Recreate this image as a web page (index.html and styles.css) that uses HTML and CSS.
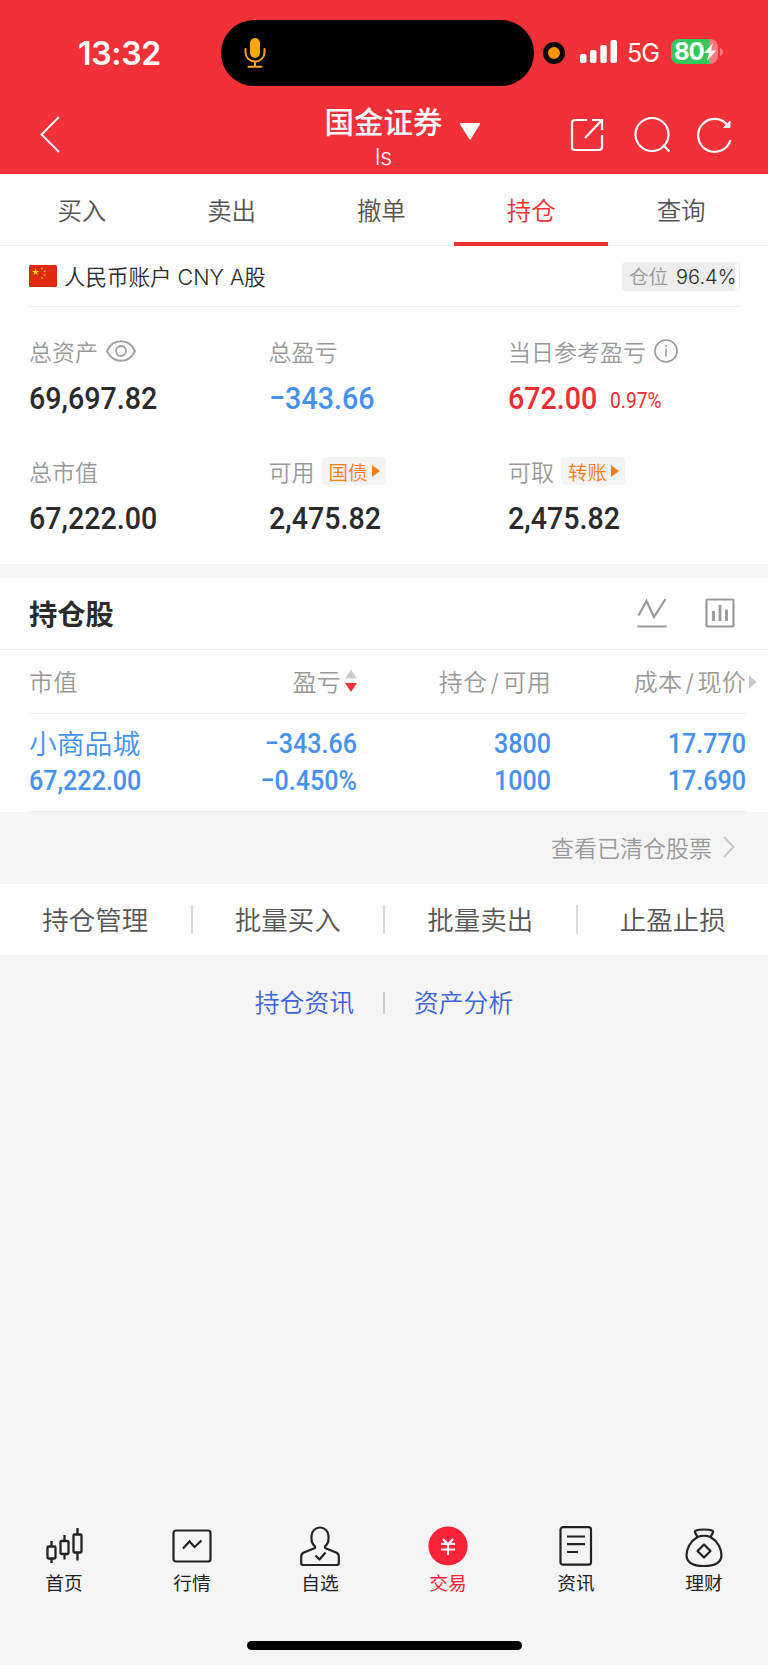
FILE: index.html
```
<!DOCTYPE html>
<html lang="zh-CN">
<head>
  <meta charset="UTF-8">
  <meta name="viewport" content="width=device-width, initial-scale=1.0">
  <title>持仓</title>
  <link rel="stylesheet" href="styles.css">
</head>
<body>

  <header class="header">
    <div class="status">
      <span class="time">13:32</span>
      <div class="island">
        <svg width="22" height="32" viewBox="0 0 22 32" fill="none" stroke="#ffa60a" stroke-width="2">
          <rect x="6" y="1" width="10" height="20" rx="5" fill="#ffa60a" stroke="none"/>
          <path d="M1.5 12v3.5a9.5 9 0 0 0 19 0V12M11 24.5v5M4.500 29.700h13" stroke-linecap="round"/>
        </svg>
      </div>
      <span class="rec-dot"></span>
      <svg class="signal" width="38" height="24" viewBox="0 0 38 24" fill="#fff">
        <rect x="0" y="14" width="6.500" height="9" rx="2"/>
        <rect x="10" y="10" width="6.500" height="13" rx="2"/>
        <rect x="20.300" y="5" width="6.500" height="18" rx="2"/>
        <rect x="30.500" y="0" width="6.500" height="23" rx="2"/>
      </svg>
      <span class="net">5G</span>
      <div class="battery">
        <span>80</span>
        <svg width="12" height="18" viewBox="0 0 12 18" fill="#fff"><path d="M9 0L0 10h5L3 18l9-10.500H7z"/></svg>
      </div>
      <svg class="battery-cap" width="3" height="8" viewBox="0 0 3 8"><path d="M0 0q3 1 3 4t-3 4z" fill="#f8797f"/></svg>
    </div>

    <div class="navbar">
      <svg class="back" width="22" height="38" viewBox="0 0 22 38" fill="none" stroke="#fff" stroke-width="2"><path d="M21 2L3.500 19.500 21 37"/></svg>
      <div class="title">
        <h1>国金证券</h1>
        <p>ls</p>
        <svg class="caret" width="22" height="18" viewBox="0 0 22 18"><path d="M2 1h18L11 15.500z" fill="#fff" stroke="#fff" stroke-width="2" stroke-linejoin="round"/></svg>
      </div>
      <div class="nav-icons">
        <svg class="share" width="34" height="34" viewBox="0 0 34 34" fill="none" stroke="#fff" stroke-width="2.200">
          <path d="M17 2H5a3 3 0 0 0-3 3v24a3 3 0 0 0 3 3h24a3 3 0 0 0 3-3V17M22 2h10v10M32 2L15 20"/>
        </svg>
        <svg width="38" height="38" viewBox="0 0 38 38" fill="none" stroke="#fff" stroke-width="2.200">
          <circle cx="18" cy="18.500" r="16.500"/><path d="M29 29l6.500 6.500"/>
        </svg>
        <svg width="36" height="38" viewBox="0 0 36 38" fill="none" stroke="#fff" stroke-width="2.200">
          <path d="M33.500 24A16.500 16.500 0 1 1 30.500 9"/><path d="M33 5v6.500h-6.500z" fill="#fff" stroke-width="1"/>
        </svg>
      </div>
    </div>
  </header>

  <nav class="tabs">
    <a>买入</a>
    <a>卖出</a>
    <a>撤单</a>
    <a class="active">持仓</a>
    <a>查询</a>
  </nav>

  <section class="account">
    <div class="account-head">
      <svg width="28" height="22" viewBox="0 0 28 22">
        <rect width="28" height="22" rx="1.500" fill="#de2910"/>
        <path d="M6.600 3.500l.9 2.500h2.700L8 7.600l.8 2.500-2.200-1.500-2.200 1.500.8-2.500L3 6h2.700z" fill="#ffde00"/>
        <g fill="#f5a800"><circle cx="13" cy="3.500" r="1.100"/><circle cx="15.700" cy="6.300" r="1.100"/><circle cx="15.700" cy="10" r="1.100"/><circle cx="13" cy="13" r="1.100"/></g>
      </svg>
      <span class="account-name">人民币账户 CNY A股</span>
      <span class="position"><i>仓位</i>96.4%</span>
    </div>

    <div class="stats">
      <div class="stat">
        <div class="label">总资产
          <svg width="30" height="22" viewBox="0 0 30 22" fill="none" stroke="#a0a0a0" stroke-width="1.800"><path d="M1 11C7-2 23-2 29 11 23 24 7 24 1 11z"/><circle cx="15" cy="11" r="5"/></svg>
        </div>
        <div class="value"><span class="num">69,697.82</span></div>
      </div>
      <div class="stat">
        <div class="label">总盈亏</div>
        <div class="value blue"><span class="num">−343.66</span></div>
      </div>
      <div class="stat">
        <div class="label">当日参考盈亏
          <svg width="24" height="24" viewBox="0 0 24 24" fill="none" stroke="#999" stroke-width="1.600"><circle cx="12" cy="12" r="11"/><path d="M12 9.500v8M12 6v2"/></svg>
        </div>
        <div class="value red"><span class="num">672.00</span><span class="num rate">0.97%</span></div>
      </div>
      <div class="stat">
        <div class="label">总市值</div>
        <div class="value"><span class="num">67,222.00</span></div>
      </div>
      <div class="stat">
        <div class="label">可用 <span class="tag">国债<svg width="8" height="12" viewBox="0 0 8 12"><path d="M0 0l8 6-8 6z" fill="#ff7d14"/></svg></span></div>
        <div class="value"><span class="num">2,475.82</span></div>
      </div>
      <div class="stat">
        <div class="label">可取 <span class="tag">转账<svg width="8" height="12" viewBox="0 0 8 12"><path d="M0 0l8 6-8 6z" fill="#ff7d14"/></svg></span></div>
        <div class="value"><span class="num">2,475.82</span></div>
      </div>
    </div>
  </section>

  <section class="holdings">
    <div class="holdings-head">
      <h2>持仓股</h2>
      <svg width="30" height="30" viewBox="0 0 30 30" fill="none" stroke="#999" stroke-width="2.200"><path d="M1.500 17.500L9.500 3l7.500 16L28.500 1M.5 28.500h29"/></svg>
      <svg width="30" height="30" viewBox="0 0 30 30" fill="none" stroke="#999" stroke-width="2.200"><rect x="1.500" y="1.500" width="27" height="27" rx="1"/><path d="M8.500 13v10M15 7v16M21.500 11.500V23" stroke-width="2.800"/></svg>
    </div>
    <div class="row row-head">
      <span>市值</span>
      <span class="sort">盈亏<svg width="12" height="24" viewBox="0 0 12 24"><path d="M0 9.500L6 .5l6 9z" fill="#ccc"/><path d="M0 14h12l-6 9z" fill="#f23037"/></svg></span>
      <span>持仓<i>/</i>可用</span>
      <span class="more">成本<i>/</i>现价<svg width="8" height="14" viewBox="0 0 8 14"><path d="M0 0l7.500 7L0 14z" fill="#ccc"/></svg></span>
    </div>
    <div class="row row-data">
      <div><b>小商品城</b><span class="num">67,222.00</span></div>
      <div><span class="num">−343.66</span><span class="num">−0.450%</span></div>
      <div><span class="num">3800</span><span class="num">1000</span></div>
      <div><span class="num">17.770</span><span class="num">17.690</span></div>
    </div>
  </section>

  <div class="cleared">查看已清仓股票
    <svg width="12" height="22" viewBox="0 0 12 22" fill="none" stroke="#c8c8c8" stroke-width="2"><path d="M1 1l9.500 10L1 21"/></svg>
  </div>

  <div class="actions">
    <a>持仓管理</a>
    <a>批量买入</a>
    <a>批量卖出</a>
    <a>止盈止损</a>
  </div>

  <div class="links">
    <a>持仓资讯</a>
    <a>资产分析</a>
  </div>

  <footer class="tabbar">
    <a>
      <svg width="40" height="42" viewBox="0 0 40 42" fill="none" stroke="#222" stroke-width="2.300">
        <rect x="3.500" y="20.500" width="8" height="12" rx="1"/><path d="M7.500 15v5.500M7.500 32.500V37"/>
        <rect x="16.500" y="15" width="8" height="13" rx="1"/><path d="M20.500 9v6M20.500 28v5.500"/>
        <rect x="29.500" y="8.500" width="8" height="18" rx="1"/><path d="M33.500 2v6.500M33.500 26.500v8"/>
      </svg>
      首页
    </a>
    <a>
      <svg width="40" height="42" viewBox="0 0 40 42" fill="none" stroke="#222" stroke-width="2.200">
        <rect x="1.500" y="4.500" width="37" height="31" rx="2.500"/><path d="M11 22.500l6.500-7 5 5.500 7-6.500"/>
      </svg>
      行情
    </a>
    <a>
      <svg width="40" height="42" viewBox="0 0 40 42" fill="none" stroke="#222" stroke-width="2.200" stroke-linejoin="round">
        <path d="M15 20.500c-4-4-3.500-6-3.500-10.500a8.500 8.500 0 0 1 17 0c0 4.500.5 6.500-3.500 10.500v1.500l11 4.500q2.800 1.200 2.800 4V37q0 2-2 2H3.200q-2 0-2-2v-6.500q0-2.800 2.800-4L15 22z"/><path d="M15.500 29.500l4 4 6-7"/>
      </svg>
      自选
    </a>
    <a class="current">
      <svg width="40" height="42" viewBox="0 0 40 42" fill="none" stroke="#fff" stroke-width="2.200">
        <circle cx="20" cy="20" r="19.600" fill="#ff2337" stroke="none"/><path d="M15 13l5 5.500 5-5.500M20 18v11M13 17.800h14M13 23.500h14"/>
      </svg>
      交易
    </a>
    <a>
      <svg width="40" height="42" viewBox="0 0 40 42" fill="none" stroke="#222" stroke-width="2.200">
        <rect x="4.500" y="1.200" width="30.500" height="37.500" rx="2.500"/><path d="M11 10.500h18M11 18.200h18M11 26h11"/>
      </svg>
      资讯
    </a>
    <a>
      <svg width="40" height="42" viewBox="0 0 40 42" fill="none" stroke="#222" stroke-width="2.200" stroke-linejoin="round">
        <path d="M13.500 11L11 6.500Q10 3.500 20 3.500t9 3L26.500 11M13.500 11q6.500-2.500 13 0C34 15.500 37.500 23 37.500 29q0 11-17.500 11T2.500 29C2.500 23 6 15.500 13.500 11z"/><path d="M20 18.500l6.500 6.500-6.500 6.500-6.500-6.500z"/>
      </svg>
      理财
    </a>
  </footer>
  <div class="home-bar"></div>

</body>
</html>
```
FILE: styles.css
```
* {
  box-sizing: border-box;
  margin: 0;
  padding: 0;
}

body {
  height: 1665px;
  display: flex;
  flex-direction: column;
  font-family: "Inter", "Noto Sans CJK SC", sans-serif;
  font-weight: 350;
  background: #f5f5f5;
  color: #2b2b2b;
  overflow: hidden;
}

svg {
  display: block;
  flex: none;
}

i {
  font-style: normal;
}

/* header */
.header {
  height: 174px;
  background: #f23037;
  color: #fff;
}

.status {
  height: 106px;
  padding-left: 78px;
  display: flex;
  align-items: center;
}

.time {
  width: 143px;
  font-size: 32px;
  font-weight: 600;
  letter-spacing: -.3px;
}

.island {
  width: 313px;
  height: 66px;
  padding-left: 23px;
  border-radius: 33px;
  background: #000;
  display: flex;
  align-items: center;
}

.rec-dot {
  width: 22px;
  height: 22px;
  margin-left: 9px;
  border: 5.5px solid #000;
  border-radius: 50%;
  background: #ff9500;
}

.signal {
  margin: -2px 0 0 15px;
}

.net {
  width: 53px;
  padding-left: 9px;
  font-size: 25px;
  font-weight: 400;
  letter-spacing: -1px;
}

.battery {
  width: 47px;
  height: 25px;
  margin-top: -3px;
  padding-left: 3px;
  border-radius: 8px;
  background: linear-gradient(to right, #34c759 38px, #f8797f 38px);
  display: flex;
  align-items: center;
  font-size: 24px;
  font-weight: 700;
  letter-spacing: -1px;
}

.battery-cap {
  margin: -3px 0 0 2px;
}

.navbar {
  height: 68px;
  padding: 0 35px 0 38px;
  display: grid;
  grid-template-columns: 1fr 160px 1fr;
}

.back {
  margin-top: 9px;
}

.title {
  position: relative;
  left: -2px;
  text-align: center;
}

.title h1 {
  font-size: 29.5px;
  font-weight: 500;
  line-height: 32px;
}

.title p {
  font-size: 23px;
  line-height: 38px;
}

.caret {
  position: absolute;
  left: 155px;
  top: 17px;
}

.nav-icons {
  height: 58px;
  display: flex;
  align-items: center;
  justify-content: flex-end;
  gap: 25px;
}

.share {
  margin-right: 5px;
}

/* tabs */
.tabs {
  height: 72px;
  padding: 0 12px 0 7px;
  display: flex;
  background: #fff;
  border-bottom: 1px solid #ececec;
}

.tabs a {
  flex: 1;
  height: 72px;
  font-size: 24.5px;
  line-height: 74px;
  text-align: center;
  color: #555;
}

.tabs .active {
  flex: 0 0 154px;
  margin: 0 -2px;
  color: #f23037;
  border-bottom: 4px solid #ea2e34;
}

/* account */
.account {
  height: 318px;
  padding: 0 28px 0 29px;
  background: #fff;
}

.account-head {
  height: 61px;
  display: flex;
  align-items: center;
  border-bottom: 1px solid #efefef;
}

.account-name {
  margin: -2px 0 0 7px;
  font-size: 21.5px;
}

.position {
  width: 118px;
  height: 29px;
  margin-left: auto;
  padding-left: 6px;
  border: 1px solid #ededed;
  border-radius: 4px;
  background: linear-gradient(to right, #ededed 96.4%, #fff 96.4%);
  font-size: 20px;
  line-height: 28px;
  white-space: nowrap;
}

.position i {
  margin-right: 8px;
  font-size: 19.5px;
  color: #999;
}

.stats {
  padding-top: 24px;
  display: grid;
  grid-template-columns: 239.5px 239.5px 1fr;
}

.stat {
  height: 120px;
}

.label {
  height: 40px;
  display: flex;
  align-items: center;
  gap: 8px;
  font-size: 23px;
  color: #999;
  white-space: nowrap;
}

.tag {
  width: 64px;
  height: 28px;
  margin-left: -1px;
  padding-left: 7px;
  border-radius: 4px;
  background: #f4f4f4;
  display: flex;
  align-items: center;
  gap: 4px;
  font-size: 19.5px;
  color: #ff7d14;
}

.value {
  height: 53px;
  display: flex;
  align-items: center;
}

/* narrow digits */
.num {
  display: inline-block;
  font-family: "Roboto", sans-serif;
  font-size: 32px;
  font-weight: 500;
  transform: scaleX(.895);
  transform-origin: left;
}

.num.rate {
  margin: 6px 0 0 2px;
  font-size: 21.5px;
  font-weight: 400;
}

.blue {
  color: #4591f0;
}

.red {
  color: #ee2d33;
}

/* holdings */
.holdings {
  height: 234px;
  margin-top: 14px;
  background: #fff;
}

.holdings-head {
  height: 72px;
  padding: 0 33px 2px 29px;
  display: flex;
  align-items: center;
  gap: 38px;
  border-bottom: 1px solid #efefef;
}

.holdings-head h2 {
  margin-right: auto;
  font-size: 28.3px;
  font-weight: 700;
}

.row {
  margin: 0 22px 0 29px;
  display: grid;
  grid-template-columns: 134px 194px 194px 195px;
  border-bottom: 1px solid #efefef;
  text-align: right;
}

.row > :first-child {
  text-align: left;
}

.row-head {
  height: 64px;
  padding-bottom: 2px;
  align-items: center;
  font-size: 24px;
  letter-spacing: .3px;
  color: #999;
}

.row-head i {
  padding: 0 3.2px;
}

.sort {
  display: flex;
  align-items: center;
  justify-content: flex-end;
  gap: 4px;
}

.more {
  position: relative;
}

.more svg {
  position: absolute;
  right: -11px;
  top: 12px;
}

.row-data {
  height: 98px;
  padding-top: 10.5px;
  color: #4591f0;
}

.row-data b,
.row-data .num {
  display: block;
  height: 37.5px;
  line-height: 37.5px;
  font-size: 28.5px;
  transform: scaleX(.88);
  transform-origin: right;
}

.row-data b {
  font-size: 27.8px;
  line-height: 39px;
  font-weight: 350;
  white-space: nowrap;
  transform: none;
}

.row-data > :first-child .num {
  transform-origin: left;
}

.cleared {
  height: 72px;
  padding: 0 33px 2px 0;
  display: flex;
  align-items: center;
  justify-content: flex-end;
  gap: 11px;
  font-size: 23px;
  color: #999;
}

.actions {
  height: 71px;
  display: flex;
  align-items: center;
  background: #fff;
}

.actions a {
  flex: 1;
  height: 29px;
  line-height: 30px;
  font-size: 26.5px;
  text-align: center;
  color: #555;
}

.actions a + a {
  border-left: 2px solid #dcdcdc;
}

.links {
  padding-top: 37px;
  display: flex;
  justify-content: center;
}

.links a {
  padding: 0 29px;
  font-size: 24.8px;
  line-height: 22px;
  color: #3b63dc;
}

.links a + a {
  border-left: 2px solid #ccc;
}

/* bottom bar */
.tabbar {
  margin-top: auto;
  display: flex;
}

.tabbar a {
  flex: 1;
  display: flex;
  flex-direction: column;
  align-items: center;
  font-size: 18.7px;
  line-height: 32px;
  font-weight: 400;
  color: #222;
}

.tabbar .current {
  color: #ff2337;
}

.home-bar {
  width: 275px;
  height: 9px;
  margin: 41px auto 15px;
  border-radius: 5px;
  background: #000;
}
```
